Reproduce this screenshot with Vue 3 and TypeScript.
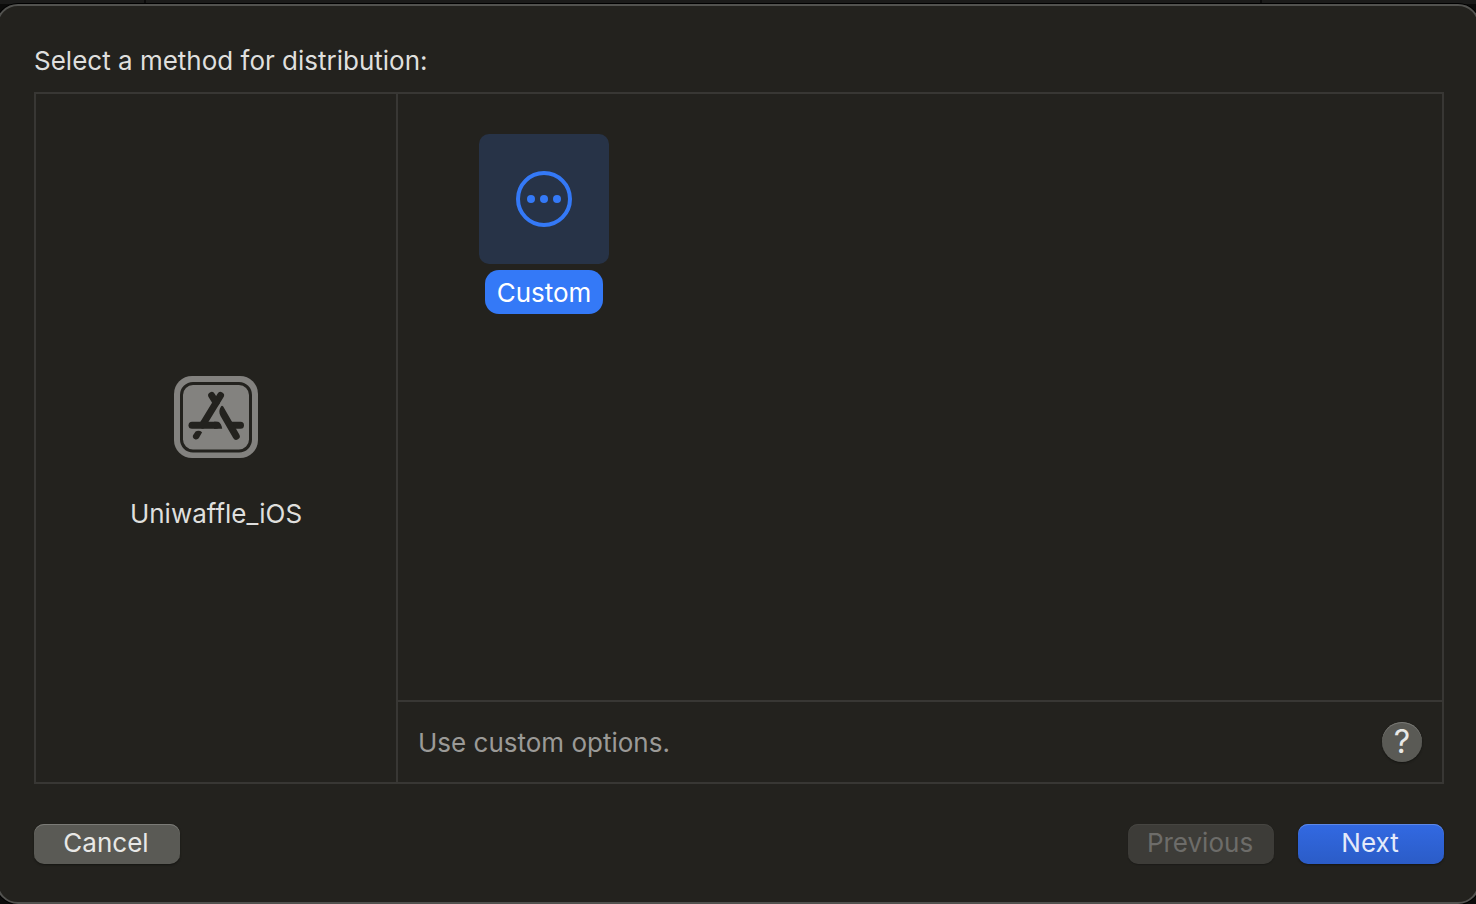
<script setup lang="ts">
import { ref } from 'vue'

interface Method {
  id: string
  label: string
  description: string
}

const archiveName = 'Uniwaffle_iOS'
const methods: Method[] = [
  { id: 'custom', label: 'Custom', description: 'Use custom options.' },
]
const selected = ref<Method>(methods[0])
</script>

<template>
  <div class="window">
    <div class="backdrop"><span></span><span></span><span></span></div>
    <main class="sheet">
      <h1 class="title">Select a method for distribution:</h1>

      <div class="panel">
        <aside class="archive">
          <svg class="archive-icon" viewBox="0 0 84 82" aria-hidden="true">
            <rect width="84" height="82" rx="18" fill="#83827f" />
            <rect x="7.5" y="7.5" width="69" height="67.5" rx="11.5" fill="none" stroke="#23221e" stroke-width="3" />
            <g fill="none" stroke="#23221e" stroke-width="7" stroke-linecap="round">
              <path d="M46.5 19.5 28.5 49" />
              <path d="M37.7 19.5 42 26.5" />
              <path d="M18 49.3H42" />
              <path d="M57 49.3H66.5" />
            </g>
            <path d="M47 30.5C48 29 49 30 49.8 31.5L65.3 58.5A3.5 3.5 0 0 1 59.2 62L46.5 40C44.8 36.5 45 33.5 47 30.5Z" fill="#23221e" />
            <path d="M40 45.8H44.2C46.5 46.8 47.8 49.5 48.2 52.8H40Z" fill="#23221e" />
            <path d="M21.6 55.6C23.4 54.5 26 54.6 28.1 56.2L25 61.8C22.7 65.5 17.3 62.4 19.2 59Z" fill="#23221e" />
          </svg>
          <span>{{ archiveName }}</span>
        </aside>

        <section class="content">
          <div class="methods">
            <button
              v-for="method in methods"
              :key="method.id"
              type="button"
              class="method"
              :class="{ selected: method.id === selected.id }"
              :aria-pressed="method.id === selected.id"
              @click="selected = method"
            >
              <span class="tile">
                <svg viewBox="0 0 56 56" aria-hidden="true">
                  <circle cx="28" cy="28" r="26" fill="none" stroke="currentColor" stroke-width="4" />
                  <circle cx="15" cy="28" r="4" fill="currentColor" />
                  <circle cx="28" cy="28" r="4" fill="currentColor" />
                  <circle cx="41" cy="28" r="4" fill="currentColor" />
                </svg>
              </span>
              <span class="method-label">{{ method.label }}</span>
            </button>
          </div>
          <footer class="description">
            <p>{{ selected.description }}</p>
            <button type="button" class="help" aria-label="Help">?</button>
          </footer>
        </section>
      </div>

      <div class="actions">
        <button type="button" class="button">Cancel</button>
        <span class="spacer"></span>
        <button type="button" class="button" disabled>Previous</button>
        <button type="button" class="button primary">Next</button>
      </div>
    </main>
  </div>
</template>

<style>
body {
  margin: 0;
  background: #0c0c0b;
}
</style>

<style scoped>
.window {
  box-sizing: border-box;
  display: flex;
  flex-direction: column;
  min-height: 100vh;
  overflow: hidden;
  background: #0c0c0b;
  color: #dfdfdd;
  font-family: Inter, "Liberation Sans", sans-serif;
  font-size: 26px;
  line-height: 32px;
}
.backdrop {
  display: grid;
  grid-template-columns: 144px 1fr 214px;
  gap: 2px;
  height: 4px;
  background: #0b0b0b;
}
.backdrop span {
  background: #1b1b1a;
}
.sheet {
  box-sizing: border-box;
  flex: 1;
  display: flex;
  flex-direction: column;
  margin: 0 -4px;
  padding: 38px 34px 38px 36px;
  border: 2px solid #52524f;
  border-radius: 22px;
  background: #23221e;
  box-shadow: 0 0 0 1px #000;
}
.title {
  margin: 0 0 14px;
  font-size: 26px;
  font-weight: 400;
  line-height: 34px;
}
.panel {
  flex: 1;
  display: grid;
  grid-template-columns: 360px 1fr;
  border: 2px solid #383734;
}
.archive {
  display: flex;
  flex-direction: column;
  align-items: center;
  justify-content: center;
  gap: 40px;
  padding-top: 30px;
}
.archive-icon {
  width: 84px;
  height: 82px;
}
.content {
  display: flex;
  flex-direction: column;
  border-left: 2px solid #383734;
}
.methods {
  flex: 1;
  display: flex;
  flex-wrap: wrap;
  align-items: flex-start;
  gap: 40px;
  padding: 40px 81px;
}
.method {
  display: flex;
  flex-direction: column;
  align-items: center;
  gap: 6px;
  padding: 0;
  border: 0;
  background: none;
  color: #dfdfdd;
  font: inherit;
}
.tile {
  display: grid;
  place-items: center;
  width: 130px;
  height: 130px;
  border-radius: 10px;
  color: #3479f7;
}
.tile svg {
  width: 56px;
  height: 56px;
}
.method-label {
  padding: 7px 12px 5px;
  border-radius: 14px;
}
.selected .tile {
  background: #273347;
}
.selected .method-label {
  background: #3479f7;
  color: #fff;
}
.description {
  display: flex;
  align-items: center;
  justify-content: space-between;
  padding: 20px;
  border-top: 2px solid #383734;
  color: #9b9a97;
}
.description p {
  margin: 0;
  padding-top: 2px;
}
.help {
  width: 40px;
  height: 40px;
  padding: 0;
  border: 0;
  border-radius: 50%;
  background: #5a5a55;
  box-shadow: inset 0 1px #787874, 0 1px 2px #151512;
  color: #e8e8e6;
  font: inherit;
  font-size: 32px;
  line-height: 40px;
}
.actions {
  display: flex;
  gap: 24px;
  padding-top: 40px;
}
.spacer {
  flex: 1;
}
.button {
  width: 146px;
  height: 40px;
  padding: 0 2px 2px 0;
  border: 0;
  border-radius: 10px;
  background: #5a5a55;
  box-shadow: inset 0 1px #7b7b77, 0 1px 2px #151512;
  color: #e8e8e6;
  font: inherit;
  line-height: 38px;
}
.button:disabled {
  background: #3d3c38;
  box-shadow: inset 0 1px #464541, 0 1px 1px #1c1b18;
  color: #6d6c69;
}
.primary {
  background: linear-gradient(#3269e2, #2b5cc7);
  box-shadow: inset 0 1px #5d88e8, 0 1px 2px #151512;
  color: #e4eafa;
}
</style>
